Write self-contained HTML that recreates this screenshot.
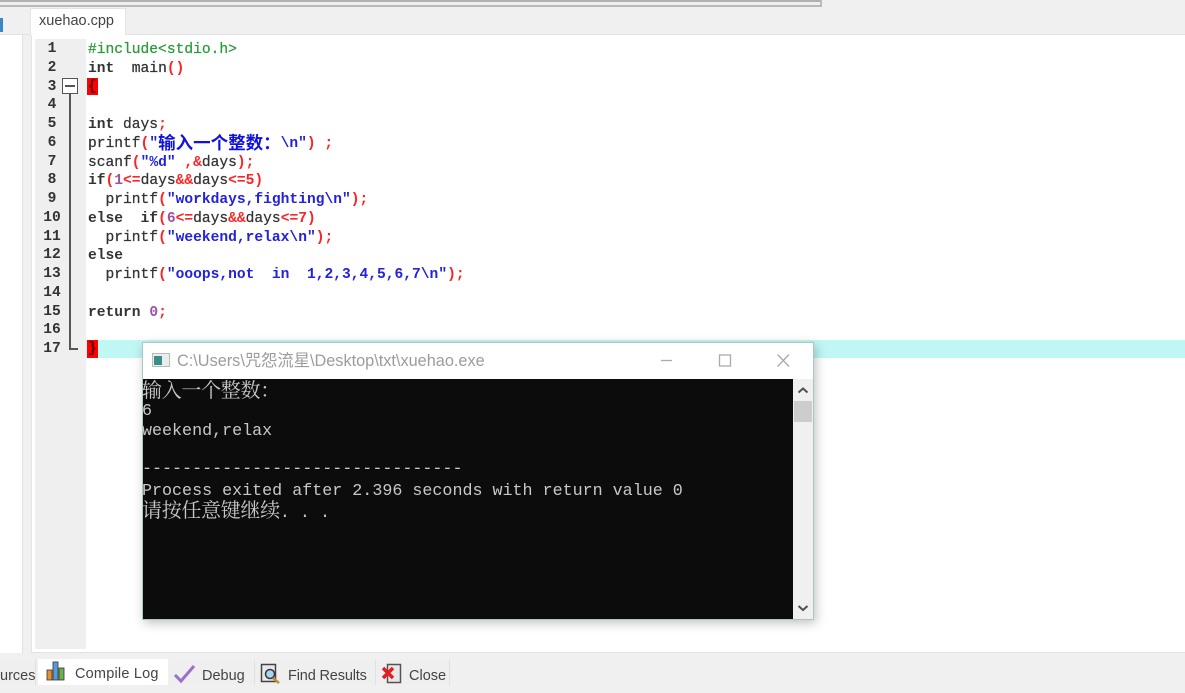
<!DOCTYPE html>
<html><head><meta charset="utf-8"><style>
html,body{margin:0;padding:0}
body{width:1185px;height:685px;overflow:hidden;position:relative;background:#f0f0f0;font-family:"Liberation Sans","Noto Sans CJK SC",sans-serif}
div{position:absolute;box-sizing:border-box}
.ln{left:35px;width:36px;text-align:center;padding-right:2px;height:19px;font:bold 14.6px/19px "Liberation Mono",monospace;color:#333;white-space:pre;margin-top:1px;filter:blur(.3px)}
.c{left:88px;height:19px;margin-top:2px;font:14.6px/19px "Liberation Mono","Noto Sans CJK SC",monospace;color:#333;white-space:pre;filter:blur(.3px);-webkit-text-stroke:.25px currentColor}
.c i{font-style:normal;font-weight:bold;-webkit-text-stroke:0}.r{color:#f22}.b{color:#22d}.p{color:#a050a0}
.c b{color:#333;-webkit-text-stroke:0}
.cjk{font-family:"Noto Sans CJK SC",sans-serif;font-size:17.5px;font-weight:700;color:#11d;line-height:0;position:relative;top:2px}
.t{left:142px;height:20px;font:16.7px/20px "Liberation Mono","Noto Serif CJK SC",monospace;color:#c8c8c8;white-space:pre;filter:blur(.35px);margin-top:2px}
.t span{font-family:"Noto Serif CJK SC",serif;font-size:20px;line-height:0;letter-spacing:-.3px}
.tab{top:660px;height:25px;background:#efefef;font-size:14.5px;color:#444;line-height:33px;white-space:pre;filter:blur(.25px)}
</style></head><body>
<div style="left:0;top:0;width:822px;height:7px;background:#efefef;border-right:2px solid #bbb;border-bottom:2px solid #b8b8b8"></div>
<div style="left:0;top:0;width:820px;height:2px;background:#b0b0b0"></div>
<div style="left:0;top:34px;width:1185px;height:1px;background:#e2e2e2"></div>
<div style="left:0;top:18px;width:3px;height:14px;background:#3a86c8"></div>
<div style="left:30px;top:8px;width:96px;height:27px;background:#fff;border:1px solid #e4e4e4;border-bottom:0;padding-left:8px;font-size:14.5px;line-height:24px;color:#444;filter:blur(.25px)">xuehao.cpp</div>
<div style="left:0;top:35px;width:23px;height:618px;background:#fff;border-right:1px solid #e2e2e2"></div>
<div style="left:31px;top:35px;width:1154px;height:618px;background:#fff;border-left:1px solid #e4e4e4;border-bottom:1px solid #e2e2e2"></div>
<div style="left:35px;top:39px;width:51px;height:610px;background:#efefef"></div>

<div class="ln" style="top:39px">1</div>
<div class="ln" style="top:58px">2</div>
<div class="ln" style="top:77px">3</div>
<div class="ln" style="top:95px">4</div>
<div class="ln" style="top:114px">5</div>
<div class="ln" style="top:133px">6</div>
<div class="ln" style="top:152px">7</div>
<div class="ln" style="top:170px">8</div>
<div class="ln" style="top:189px">9</div>
<div class="ln" style="top:208px">10</div>
<div class="ln" style="top:227px">11</div>
<div class="ln" style="top:245px">12</div>
<div class="ln" style="top:264px">13</div>
<div class="ln" style="top:283px">14</div>
<div class="ln" style="top:302px">15</div>
<div class="ln" style="top:320px">16</div>
<div class="ln" style="top:339px">17</div>

<div style="left:62px;top:78px;width:16px;height:16px;background:#fff;border:1.5px solid #555"></div>
<div style="left:65px;top:85px;width:10px;height:1.5px;background:#555"></div>
<div style="left:69px;top:94px;width:1.5px;height:255px;background:#555"></div>
<div style="left:69px;top:348px;width:9px;height:1.5px;background:#555"></div>

<div style="left:86px;top:340px;width:1099px;height:18px;background:#bff7f5"></div>
<div style="left:87px;top:78px;width:11px;height:17px;background:#f00"></div>
<div style="left:87px;top:340px;width:11px;height:18px;background:#f00"></div>

<div class="c" style="top:39px;color:#2a9a3a">#include&lt;stdio.h&gt;</div>
<div class="c" style="top:58px"><b>int</b>  main<i class="r">()</i></div>
<div class="c" style="top:76px;color:#600;font-weight:bold">{</div>
<div class="c" style="top:114px"><b>int</b> days<i class="r">;</i></div>
<div class="c" style="top:133px">printf<i class="r">(</i><i class="b">"</i><i class="cjk">输入一个整数：</i><i class="b">\n"</i><i class="r">) ;</i></div>
<div class="c" style="top:152px">scanf<i class="r">(</i><i class="b">"%d"</i> <i class="r">,&amp;</i>days<i class="r">);</i></div>
<div class="c" style="top:170px"><b>if</b><i class="r">(</i><i class="p">1</i><i class="r">&lt;=</i>days<i class="r">&amp;&amp;</i>days<i class="r">&lt;=5)</i></div>
<div class="c" style="top:189px">  printf<i class="r">(</i><i class="b">"workdays,fighting\n"</i><i class="r">);</i></div>
<div class="c" style="top:208px"><b>else</b>  <b>if</b><i class="r">(</i><i class="p">6</i><i class="r">&lt;=</i>days<i class="r">&amp;&amp;</i>days<i class="r">&lt;=7)</i></div>
<div class="c" style="top:227px">  printf<i class="r">(</i><i class="b">"weekend,relax\n"</i><i class="r">);</i></div>
<div class="c" style="top:245px"><b>else</b></div>
<div class="c" style="top:264px">  printf<i class="r">(</i><i class="b">"ooops,not  in  1,2,3,4,5,6,7\n"</i><i class="r">);</i></div>
<div class="c" style="top:302px"><b>return</b> <i class="p">0</i><i class="r">;</i></div>
<div class="c" style="top:338px;color:#600;font-weight:bold">}</div>

<!-- console window -->
<div style="left:142px;top:342px;width:672px;height:278px;background:#fff;border:1px solid #a8c8c8;box-shadow:2px 3px 10px rgba(0,0,0,.25)"></div>
<div style="left:152px;top:353px;width:18px;height:14px;background:#e8eeee;border:1px solid #bbb"></div>
<div style="left:154px;top:356px;width:8px;height:9px;background:#3c8c88"></div>
<div style="left:177px;top:351px;font-size:16.3px;line-height:20px;color:#9c9c9c;white-space:pre;filter:blur(.3px)">C:\Users\咒怨流星\Desktop\txt\xuehao.exe</div>
<svg style="position:absolute;left:650px;top:345px" width="150" height="30" fill="none" stroke="#aaa" stroke-width="1.3">
<path d="M11 15.500H22"/><rect x="69.500" y="10" width="11" height="11"/><path d="M127.500 9.500L139 21.500M139 9.500L127.500 21.500"/>
</svg>
<div style="left:143px;top:379px;width:650px;height:240px;background:#0c0c0c"></div>
<div style="left:793px;top:379px;width:20px;height:240px;background:#f0f0f0"></div>
<div style="left:794px;top:401px;width:18px;height:21px;background:#cdcdcd"></div>
<svg style="position:absolute;left:793px;top:379px" width="20" height="240" fill="none" stroke="#505050" stroke-width="2">
<path d="M5.500 13.500L10 9.500L14.500 13.500"/><path d="M5.500 227L10 231L14.500 227"/>
</svg>
<div class="t" style="top:382px"><span>输入一个整数：</span></div>
<div class="t" style="top:400px">6</div>
<div class="t" style="top:420px">weekend,relax</div>
<div class="t" style="top:458px">--------------------------------</div>
<div class="t" style="top:480px">Process exited after 2.396 seconds with return value 0</div>
<div class="t" style="top:502px"><span>请按任意键继续</span>. . .</div>

<!-- bottom tabs -->
<div class="tab" style="left:0;width:36px;border-right:1px solid #e0e0e0;text-align:right;padding-right:6px">urces</div>
<div class="tab" style="left:38px;top:659px;width:130px;height:26px;background:#fff;padding-left:37px;line-height:31px;letter-spacing:.2px">Compile Log</div>
<svg style="position:absolute;left:46px;top:660px" width="22" height="22" stroke="#333" stroke-width=".8">
<rect x="1" y="10" width="5" height="10" fill="#e8902c"/><rect x="7" y="2" width="5" height="18" fill="#5a9ad8"/><rect x="13" y="8" width="5" height="12" fill="#6cb04c"/>
</svg>
<div class="tab" style="left:170px;width:83px;padding-left:32px">Debug</div>
<svg style="position:absolute;left:173px;top:662px" width="24" height="22" fill="none">
<path d="M2 13L8 19L21 4" stroke="#9a70c8" stroke-width="3"/>
</svg>
<div class="tab" style="left:254px;width:120px;padding-left:33px;border-left:1px solid #e0e0e0;letter-spacing:-.15px">Find Results</div>
<svg style="position:absolute;left:260px;top:663px" width="22" height="22" fill="none">
<rect x="1.500" y="1.500" width="14" height="17" fill="#e8e8e8" stroke="#444" stroke-width="1.500"/><circle cx="10" cy="11" r="4.500" fill="#a8d8f0" stroke="#334" stroke-width="1.500"/><path d="M13 15L19 20" stroke="#c09030" stroke-width="2.500"/>
</svg>
<div class="tab" style="left:375px;width:75px;padding-left:33px;border-left:1px solid #e0e0e0;border-right:1px solid #e0e0e0">Close</div>
<svg style="position:absolute;left:380px;top:663px" width="24" height="22" fill="none">
<rect x="7.500" y="1.500" width="13" height="18" fill="#e8e8e8" stroke="#555" stroke-width="1.500"/><path d="M3 5L13 15M13 5L3 15" stroke="#e02020" stroke-width="3.500"/>
</svg>
</body></html>
